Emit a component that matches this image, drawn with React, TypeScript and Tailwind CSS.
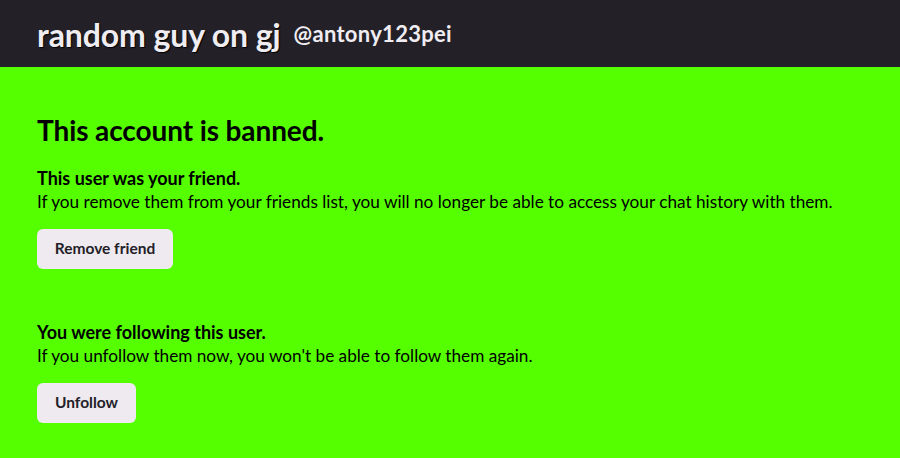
export default function App() {
  return (
    <div className="min-h-screen bg-[#55ff00] font-['Lato',sans-serif] text-black">
      <header className="h-[67px] bg-[#232127] flex items-center px-[37px] gap-[13px]">
        <h1 className="text-[32px] font-bold tracking-[-0.1px] text-[#f0edf2] [text-shadow:1px_1px_1px_#000] leading-none pt-[2px]">
          random guy on gj
        </h1>
        <span className="text-[22px] font-bold tracking-[0.3px] text-[#f0edf2] leading-none">
          @antony123pei
        </span>
      </header>

      <main className="px-[37px] pt-[49px]">
        <h2 className="text-[28px] font-bold leading-none tracking-[-0.1px]">
          This account is banned.
        </h2>

        <section className="mt-[23px]">
          <h3 className="text-[18px] font-bold leading-[22px]">
            This user was your friend.
          </h3>
          <p className="text-[17.2px] leading-[26px]">
            If you remove them from your friends list, you will no longer be able to
            access your chat history with them.
          </p>
          <button className="mt-[14px] h-[40px] w-[136px] rounded-[6px] bg-[#eeeaf0] text-[15.5px] font-bold text-[#232127]">
            Remove friend
          </button>
        </section>

        <section className="mt-[52px]">
          <h3 className="text-[18px] font-bold leading-[22px]">
            You were following this user.
          </h3>
          <p className="text-[17.2px] leading-[26px]">
            If you unfollow them now, you won't be able to follow them again.
          </p>
          <button className="mt-[14px] h-[40px] w-[99px] rounded-[6px] bg-[#eeeaf0] text-[15.5px] font-bold text-[#232127]">
            Unfollow
          </button>
        </section>
      </main>
    </div>
  );
}
